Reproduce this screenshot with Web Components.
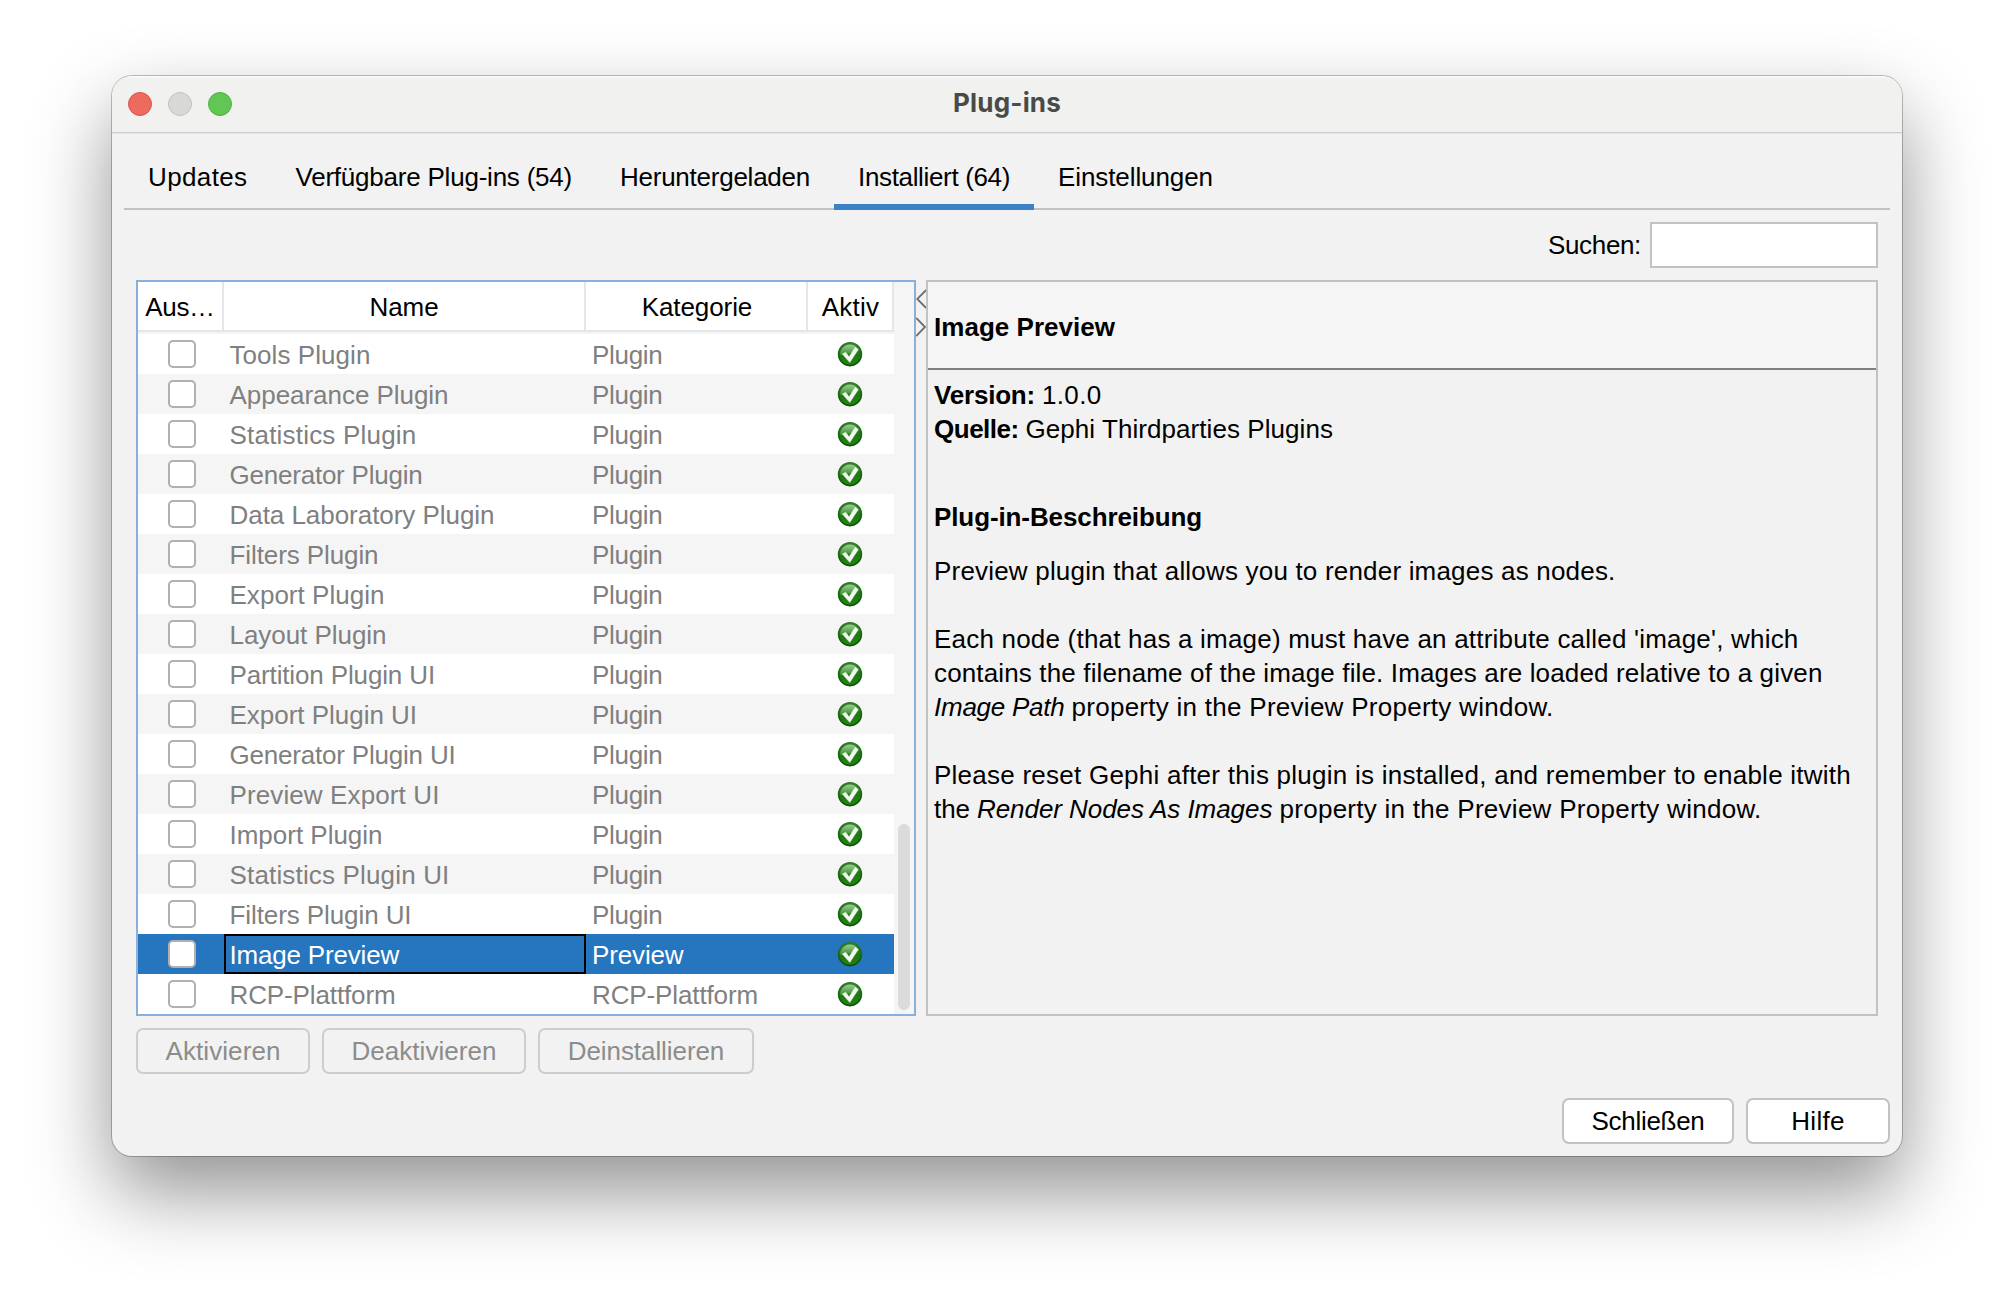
<!DOCTYPE html>
<html lang="de">
<head>
<meta charset="utf-8">
<title>Plug-ins</title>
<style>
html,body{margin:0;background:#fff;height:1304px;overflow:hidden}
body{font:26px "Liberation Sans",Arial,sans-serif;color:#000}
</style>
</head>
<body>
<plugin-dialog></plugin-dialog>
<script>
const define = (name, html, init) => customElements.define(name, class extends HTMLElement {
  constructor() {
    super();
    const t = document.createElement('template');
    t.innerHTML = typeof html === 'function' ? html(this) : html;
    this.attachShadow({mode: 'open'}).append(t.content.cloneNode(true));
  }
  connectedCallback() { if (init) init(this); }
});

const plugins = [
  ['Tools Plugin', 141], ['Appearance Plugin', 219], ['Statistics Plugin', 187], ['Generator Plugin', 193],
  ['Data Laboratory Plugin', 265], ['Filters Plugin', 149], ['Export Plugin', 155], ['Layout Plugin', 157],
  ['Partition Plugin UI', 205.500], ['Export Plugin UI', 187.500], ['Generator Plugin UI', 226], ['Preview Export UI', 210],
  ['Import Plugin', 153], ['Statistics Plugin UI', 220], ['Filters Plugin UI', 182],
  ['Image Preview', 169.500, 'Preview', 91.500, 1], ['RCP-Plattform', 166, 'RCP-Plattform', 166]
];

define('plugin-dialog', `
<style>
:host{display:flex;flex-direction:column;box-sizing:border-box;width:1790px;height:1080px;margin:76px 0 0 112px;
  background:#f2f2f2;border-radius:20px;overflow:hidden;
  box-shadow:0 0 0 1px rgba(0,0,0,.24),0 36px 80px rgba(0,0,0,.43)}
.search{display:flex;justify-content:flex-end;align-items:center;gap:9px;height:46px;padding:12px 24px 0 0}
.search label{line-height:46px}
.field{box-sizing:border-box;width:228px;height:46px;border:2px solid #c2c2c2;background:#fff}
.split{display:flex;height:736px;margin:12px 24px 0}
.row{display:flex;gap:12px;margin:12px 24px 0}
.end{justify-content:flex-end;margin:24px 12px 0}
</style>
<title-bar><fit-text w="108">Plug-ins</fit-text></title-bar>
<tab-strip>
  <tab-item w="99.500">Updates</tab-item>
  <tab-item w="276.500">Verfügbare Plug-ins (54)</tab-item>
  <tab-item w="190">Heruntergeladen</tab-item>
  <tab-item w="152" active>Installiert (64)</tab-item>
  <tab-item w="155">Einstellungen</tab-item>
</tab-strip>
<div class="search"><label><fit-text w="93">Suchen:</fit-text></label><div class="field"></div></div>
<div class="split"><plugin-table></plugin-table><split-handle></split-handle><plugin-detail></plugin-detail></div>
<div class="row">
  <push-button disabled style="width:174px"><fit-text w="115">Aktivieren</fit-text></push-button>
  <push-button disabled style="width:204px"><fit-text w="145">Deaktivieren</fit-text></push-button>
  <push-button disabled style="width:216px"><fit-text w="156.500">Deinstallieren</fit-text></push-button>
</div>
<div class="row end">
  <push-button style="width:172px"><fit-text w="113">Schließen</fit-text></push-button>
  <push-button style="width:144px"><fit-text w="53.500">Hilfe</fit-text></push-button>
</div>`);

define('title-bar', `
<style>
:host{display:grid;grid-template-columns:1fr auto 1fr;align-items:center;flex:none;box-sizing:border-box;height:58px;
  background:linear-gradient(#fbfbfa,#f1f1ef 3px);border-bottom:1px solid #e6e6e6;box-shadow:inset 0 -1px #cbcbcb;
  font:700 26px/52px Inter,sans-serif;color:#4a4a48}
.lights{display:flex;gap:16px;padding:0 0 1px 16px}
i{box-sizing:border-box;width:24px;height:24px;border-radius:50%;border:1px solid}
.r{background:#ed6a5f;border-color:#d8564c}.g{background:#d8d8d6;border-color:#c0c0be}.n{background:#62c655;border-color:#51ae43}
.t{padding-bottom:4px}
</style>
<div class="lights"><i class="r"></i><i class="g"></i><i class="n"></i></div><div class="t"><slot></slot></div>`);

define('tab-strip', `
<style>
:host{display:flex;flex:none;box-sizing:border-box;height:76px;margin:0 12px;background:linear-gradient(#c2c2c2,#c2c2c2) bottom/100% 2px no-repeat}
</style><slot></slot>`);

define('tab-item', el => `
<style>
:host{display:block;box-sizing:border-box;height:76px;padding:28px 24px 0;line-height:30px}
:host([active]){border-bottom:6px solid #3c83c5}
</style><fit-text w="${el.getAttribute('w')}"><slot></slot></fit-text>`);

define('push-button', `
<style>
:host{display:flex;justify-content:center;box-sizing:border-box;height:46px;border:2px solid #c2c2c2;border-radius:7px;
  background:#fff;line-height:42px}
:host([disabled]){background:none;border-color:#cdcdcd;color:#8c8c8c}
</style><slot></slot>`);

define('split-handle', `
<style>:host{display:block;width:10px}svg{display:block}</style>
<svg width="10" height="60" viewBox="0 0 10 60" fill="none" stroke="#6e6e6e" stroke-width="1.8"><path d="M10.200 10L1.200 19l9 9M.2 38l8.800 9-8.800 9"/></svg>`);

define('plugin-table', `
<style>
:host{display:flex;box-sizing:border-box;width:780px;height:736px;border:2px solid #89b0d9;background:#f5f5f5}
.main{width:756px}
.head{display:flex;height:52px;box-sizing:border-box;padding-bottom:2px}
.head div{box-sizing:border-box;height:50px;border:solid #e6e6e6;border-width:0 2px 2px 0;background:#fff;text-align:center;
  line-height:48px;padding-top:1px}
.bar{width:12px;height:186px;border-radius:6px;background:#dbdbdb;margin:542px 0 0 4px}
</style>
<div class="main">
<div class="head"><div style="width:86px"><fit-text w="69.500">Aus…</fit-text></div><div style="width:362px"><fit-text w="69">Name</fit-text></div><div style="width:222px;padding-left:2px"><fit-text w="110.500">Kategorie</fit-text></div><div style="width:86px;padding-left:1px"><fit-text w="57.500">Aktiv</fit-text></div></div>
${plugins.map(([n, w, c = 'Plugin', cw = 70.5, s], i) => `<plugin-row ${s ? 'selected' : i % 2 ? 'odd' : ''}><fit-text slot="name" w="${w}">${n}</fit-text><fit-text slot="category" w="${cw}">${c}</fit-text></plugin-row>`).join('')}
</div><div class="bar"></div>`);

define('plugin-row', `
<style>
:host{display:flex;align-items:center;height:40px;background:#fff;color:#808080;line-height:40px}
:host([odd]){background:#f5f5f5}
:host([selected]){background:#2675bf;color:#fff}
.box{box-sizing:border-box;width:28px;height:28px;border:2px solid #b0b0b0;border-radius:5px;background:#fff;margin:0 28px 0 30px}
.name,.cat{box-sizing:border-box;height:40px;padding:1px 0 0 5.500px;overflow:hidden}
.name{width:362px}.cat{width:222px;padding-left:6px}
:host([selected]) .name{border:2px solid #000;padding:0 0 0 3.500px;line-height:38px}
.act{flex:1;display:flex;padding-left:29px}
</style>
<div class="box"></div><div class="name"><slot name="name"></slot></div><div class="cat"><slot name="category"></slot></div>
<div class="act"><check-icon></check-icon></div>`);

define('check-icon', `
<style>:host{display:block}svg{display:block}</style>
<svg width="26" height="26" viewBox="0 0 26 26">
<defs><linearGradient id="b" x1="0" y1="0" x2="0" y2="1"><stop offset="0" stop-color="#2f8a26"/><stop offset=".55" stop-color="#1c7a0e"/><stop offset="1" stop-color="#23860f"/></linearGradient>
<linearGradient id="h" x1="0" y1="0" x2="0" y2="1"><stop offset="0" stop-color="#9ccb91"/><stop offset="1" stop-color="#3f8f33"/></linearGradient>
<linearGradient id="r" x1="0" y1="0" x2="0" y2="1"><stop offset="0" stop-color="#2c7a26"/><stop offset="1" stop-color="#0c4f0a"/></linearGradient></defs>
<circle cx="13" cy="13.200" r="11.400" fill="url(#b)" stroke="url(#r)" stroke-width="1.600"/>
<path d="M3.200 14a9.800 9.800 0 0 1 18.600-5C17 9.500 14 14 3.200 14z" fill="url(#h)"/>
<path d="M5.300 13L8.600 11.300l3.500 4.400 6-9.500 3.200 2.400-8.500 12.800z" fill="#f4f7f3" stroke="#f4f7f3" stroke-width=".4" stroke-linejoin="round"/>
</svg>`);

define('plugin-detail', `
<style>
:host{display:block;box-sizing:border-box;width:952px;height:736px;border:2px solid #c2c2c2;line-height:34px}
.head{height:86px;box-sizing:border-box;padding:2px 0 0 6px;background:#f5f5f5;line-height:86px;font-weight:bold;overflow:hidden}
hr{height:2px;margin:0;border:0;background:#808080}
.body{padding:8px 0 0 6px}
h3{font:inherit;font-weight:bold;margin:54px 0 20px}
p{display:flex;flex-direction:column;margin:0;white-space:nowrap}p+p.gap{margin-top:34px}p>span{display:flex}
</style>
<div class="head"><fit-text w="181">Image Preview</fit-text></div><hr>
<div class="body">
<p><span><b><fit-text w="108">Version: </fit-text></b><fit-text w="59.500">1.0.0</fit-text></span>
<span><b><fit-text w="91.500">Quelle: </fit-text></b><fit-text w="307.500">Gephi Thirdparties Plugins</fit-text></span></p>
<h3><fit-text w="268">Plug-in-Beschreibung</fit-text></h3>
<p><fit-text w="681.500">Preview plugin that allows you to render images as nodes.</fit-text></p>
<p class="gap"><fit-text w="864.500">Each node (that has a image) must have an attribute called 'image', which</fit-text>
<fit-text w="888.500">contains the filename of the image file. Images are loaded relative to a given</fit-text>
<span><i><fit-text w="137.500">Image Path </fit-text></i><fit-text w="482">property in the Preview Property window.</fit-text></span></p>
<p class="gap"><fit-text w="917">Please reset Gephi after this plugin is installed, and remember to enable itwith</fit-text>
<span><fit-text w="43">the </fit-text><i><fit-text w="302.500">Render Nodes As Images </fit-text></i><fit-text w="482">property in the Preview Property window.</fit-text></span></p>
</div>`);

/* Spreads its text to the advance width given in the w attribute. */
define('fit-text', '<style>:host{display:inline-block;white-space:pre;align-self:flex-start}</style><slot></slot>', el => {
  const text = el.textContent.length ? el.textContent : el.getRootNode().host.textContent;
  const w = +el.getAttribute('w');
  el.style.letterSpacing = (w - el.getBoundingClientRect().width) / text.length + 'px';
});
</script>
</body>
</html>
